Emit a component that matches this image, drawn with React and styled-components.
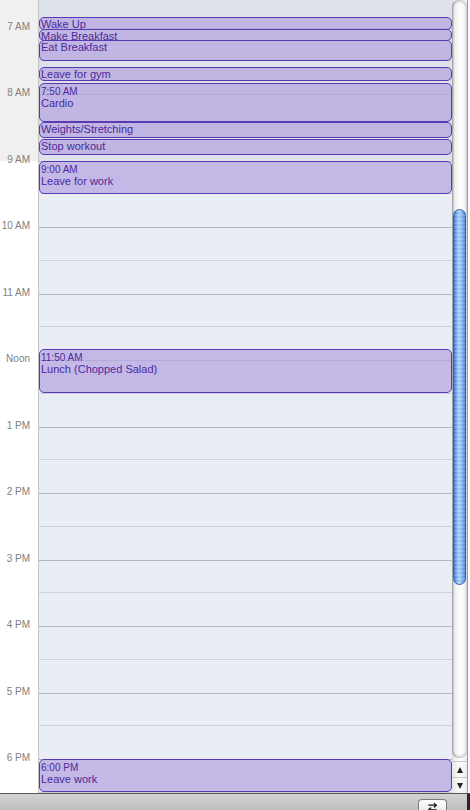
import styled, { createGlobalStyle } from "styled-components";
import { ArrowRightLeft } from "lucide-react";

const HOUR = 66.5;

const hours = [
  { label: "7 AM", off: true },
  { label: "8 AM", off: true },
  { label: "9 AM" },
  { label: "10 AM" },
  { label: "11 AM" },
  { label: "Noon" },
  { label: "1 PM" },
  { label: "2 PM" },
  { label: "3 PM" },
  { label: "4 PM" },
  { label: "5 PM" },
  { label: "6 PM" },
];

const events = [
  { title: "Wake Up", top: 17, height: 13 },
  { title: "Make Breakfast", top: 29, height: 12 },
  { title: "Eat Breakfast", top: 40, height: 21 },
  { title: "Leave for gym", top: 67, height: 14 },
  { time: "7:50 AM", title: "Cardio", top: 83, height: 39 },
  { title: "Weights/Stretching", top: 122, height: 16 },
  { title: "Stop workout", top: 139, height: 16 },
  { time: "9:00 AM", title: "Leave for work", top: 161, height: 33 },
  { time: "11:50 AM", title: "Lunch (Chopped Salad)", top: 349, height: 44 },
  { time: "6:00 PM", title: "Leave work", top: 759, height: 33 },
];

export default function App() {
  return (
    <>
      <GlobalStyle />
      <Frame>
        <Viewport>
          <Day>
            <HourRow $height={27.5} $off>
              <Gutter $off />
              <Slot $off $first />
            </HourRow>
            {hours.map((h) => (
              <HourRow key={h.label} $height={HOUR}>
                <Gutter $off={h.off}>
                  <HourLabel>{h.label}</HourLabel>
                </Gutter>
                <Slot $off={h.off} />
              </HourRow>
            ))}
            <EventLayer>
              {events.map((e) => (
                <EventBox key={e.title} $top={e.top} $height={e.height}>
                  {e.time && <EventTime>{e.time}</EventTime>}
                  <EventTitle>{e.title}</EventTitle>
                </EventBox>
              ))}
            </EventLayer>
          </Day>
          <Scrollbar>
            <Track>
              <Thumb />
            </Track>
            <ArrowButton>
              <Arrow $up />
            </ArrowButton>
            <ArrowButton>
              <Arrow />
            </ArrowButton>
          </Scrollbar>
          <Edge />
        </Viewport>
        <Footer>
          <FooterButton>
            <ArrowRightLeft size={11} strokeWidth={2.6} color="#111" />
          </FooterButton>
          <FooterEdge />
        </Footer>
      </Frame>
    </>
  );
}

const GlobalStyle = createGlobalStyle`
  body {
    margin: 0;
    overflow: hidden;
    font-family: "Liberation Sans", Arial, sans-serif;
  }
`;

const Frame = styled.div`
  width: 470px;
  height: 810px;
  display: grid;
  grid-template-rows: 793px 17px;
  overflow: hidden;
`;

const Viewport = styled.div`
  display: flex;
  overflow: hidden;
`;

const Day = styled.div`
  position: relative;
  flex: 1;
  overflow: hidden;
`;

const HourRow = styled.div`
  display: grid;
  grid-template-columns: 39px 1fr;
  height: ${(p) => p.$height}px;
`;

const Gutter = styled.div`
  box-sizing: border-box;
  border-right: 1px solid #c4c4c4;
  background: ${(p) => (p.$off ? "#f0f0f0" : "#ffffff")};
  padding-right: 8px;
  text-align: right;
`;

const HourLabel = styled.div`
  margin-top: -7px;
  font-size: 10px;
  line-height: 12px;
  color: #808080;
`;

const Slot = styled.div`
  box-sizing: border-box;
  background: ${(p) => (p.$off ? "#dde2ea" : "#e9edf6")};
  border-top: ${(p) => (p.$first ? "none" : "1px solid #b3b7c0")};

  &::before {
    content: "";
    display: ${(p) => (p.$first ? "none" : "block")};
    box-sizing: border-box;
    height: 50%;
    border-bottom: 1px solid #cdd1d9;
  }
`;

const EventLayer = styled.div`
  position: absolute;
  top: 0;
  left: 39px;
  right: 0;
`;

const EventBox = styled.div`
  position: absolute;
  left: 0;
  right: 0;
  top: ${(p) => p.$top}px;
  height: ${(p) => p.$height}px;
  box-sizing: border-box;
  padding: 0 1px;
  border: 1px solid #5a3ab2;
  border-radius: 5px;
  background: rgba(182, 163, 225, 0.72);
  overflow: hidden;
  color: #4a2a9c;
  white-space: nowrap;
`;

const EventTime = styled.div`
  padding-top: 1.5px;
  font-size: 10px;
  line-height: 11px;
`;

const EventTitle = styled.div`
  font-size: 11px;
  line-height: 13px;
`;

const Scrollbar = styled.div`
  width: 15px;
  display: flex;
  flex-direction: column;
  background: linear-gradient(to right, #d9d9d9, #f4f4f4 25%, #ffffff 60%, #ededed);
`;

const Track = styled.div`
  flex: 1;
  padding-top: 209px;
  border-radius: 7px;
  box-shadow: inset 1px 0 2px rgba(0, 0, 0, 0.22), inset 0 2px 3px rgba(0, 0, 0, 0.15),
    inset 0 -2px 3px rgba(0, 0, 0, 0.15);
  margin-bottom: 3px;
`;

const Thumb = styled.div`
  box-sizing: border-box;
  width: 13px;
  margin-left: 1px;
  height: 376px;
  border: 1px solid #2f5fae;
  border-radius: 7px;
  background: repeating-linear-gradient(
      to bottom,
      rgba(255, 255, 255, 0.12) 0,
      rgba(255, 255, 255, 0.12) 2px,
      rgba(0, 40, 120, 0.05) 2px,
      rgba(0, 40, 120, 0.05) 4px
    ),
    linear-gradient(to right, #3c74cf 0%, #78abee 22%, #b0d3fb 45%, #8cc0f6 68%, #4f8be0 100%);
`;

const ArrowButton = styled.div`
  height: 15px;
  display: flex;
  align-items: center;
  justify-content: center;
  border-top: 1px solid #c9c9c9;
  background: linear-gradient(to right, #e6e6e6, #fbfbfb 50%, #eeeeee);
`;

const Arrow = styled.div`
  width: 0;
  height: 0;
  border-left: 3.5px solid transparent;
  border-right: 3.5px solid transparent;
  ${(p) =>
    p.$up ? "border-bottom: 6px solid #222;" : "border-top: 6px solid #222;"}
`;

const Edge = styled.div`
  width: 3px;
  box-sizing: border-box;
  border-left: 1px solid #9a9a9a;
  background: #ffffff;
`;

const Footer = styled.div`
  display: flex;
  justify-content: flex-end;
  align-items: flex-start;
  border-top: 1px solid #555;
  background: linear-gradient(#d3d3d3, #bdbdbd);
`;

const FooterButton = styled.div`
  box-sizing: border-box;
  width: 29px;
  height: 14px;
  margin-top: 5px;
  margin-right: 20px;
  display: flex;
  justify-content: center;
  padding-top: 2px;
  border: 1px solid #7c7c7c;
  border-bottom: none;
  border-radius: 4px 4px 0 0;
  background: linear-gradient(#ffffff, #e6e6e6);
`;

const FooterEdge = styled.div`
  width: 3px;
  align-self: stretch;
  background: #262626;
`;
